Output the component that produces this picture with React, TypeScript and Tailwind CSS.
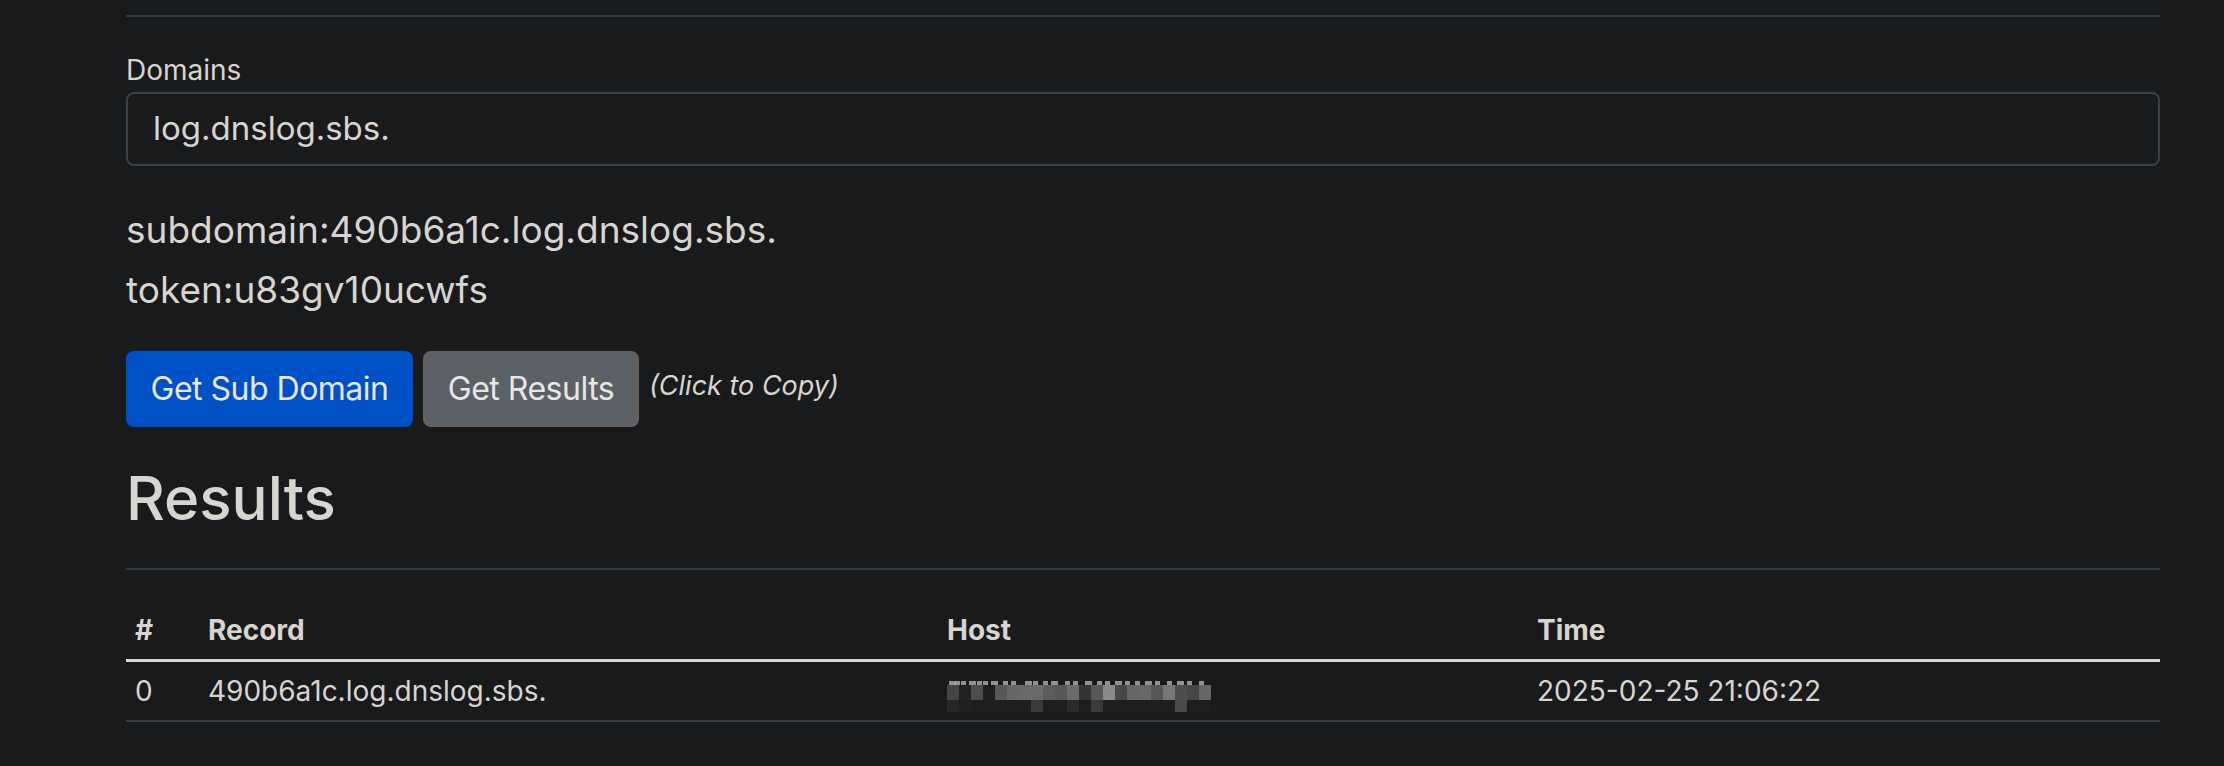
import React from "react";

const rowA = [
  "#454545", "#222222", "#4d4d4d", "#1e1e1e", "#575757", "#676767", "#6a6a6a", "#6a6a6a",
  "#5c5c5c", "#565656", "#6b6b6b", "#343434", "#575757", "#8a8a8a", "#474747", "#666666",
  "#686868", "#575757", "#777777", "#4d4d4d", "#474747", "#666666",
];
const rowB: Record<number, string> = { 0: "#262626", 1: "#202020", 7: "#3a3a3a", 10: "#2b2b2b", 12: "#3a3a3a", 19: "#4a4a4a" };
const tops = [2, 8, 14, 22, 30, 36, 44, 56, 64, 78, 86, 96, 104, 118, 126, 138, 150, 158, 168, 178, 188, 198, 208, 220, 230, 240, 252];

function Mosaic() {
  return (
    <svg width="264" height="32" viewBox="0 0 264 32" className="block">
      {tops.map((x, i) => (
        <rect key={"t" + i} x={x} y={1} width={i % 3 === 0 ? 7 : 5} height={4} fill="#bdbab5" opacity={0.75} />
      ))}
      {rowA.map((c, i) => (
        <rect key={"a" + i} x={i * 12} y={5} width={12} height={15} fill={c} />
      ))}
      {rowA.map((_, i) => (
        <rect key={"b" + i} x={i * 12} y={20} width={12} height={12} fill={rowB[i] ?? "#1c1e1f"} />
      ))}
    </svg>
  );
}

export default function App() {
  return (
    <div className="min-h-[766px] bg-[#181a1b] text-[#d8d4cf] font-['Inter',sans-serif]">
      <div className="ml-[126px] w-[2034px] pt-[15px]">
        <div className="h-[2px] bg-[#35393b]" />

        <label className="mt-[32px] block text-[28px] leading-[42px]">Domains</label>
        <div className="mt-[1px] h-[74px] rounded-[8px] border-2 border-[#3b4043] flex items-center px-[25px] text-[33px]">
          log.dnslog.sbs.
        </div>

        <div className="mt-[34px] text-[37px] leading-[60px]">
          <div>subdomain:490b6a1c.log.dnslog.sbs.</div>
          <div>token:u83gv10ucwfs</div>
        </div>

        <div className="mt-[31px] flex items-center h-[76px] gap-[10px]">
          <button className="h-[76px] w-[287px] rounded-[8px] bg-[#0050c6] border-2 border-[#0050c6] text-[#e8e6e3] text-[32px] tracking-[-0.5px] flex items-center justify-center">
            Get Sub Domain
          </button>
          <button className="h-[76px] w-[216px] rounded-[8px] bg-[#5b6166] border-2 border-[#6a6259] text-[#e8e6e3] text-[32px] tracking-[-0.5px] flex items-center justify-center">
            Get Results
          </button>
          <span className="mb-[6px] text-[27px] italic">(Click to Copy)</span>
        </div>

        <h2 className="mt-[34px] text-[60px] leading-[74px] font-medium">Results</h2>
        <div className="mt-[33px] h-[2px] bg-[#35393b]" />

        <table className="mt-[31px] w-full table-fixed border-collapse text-[28px] leading-[42px]">
          <colgroup>
            <col className="w-[73px]" />
            <col className="w-[739px]" />
            <col className="w-[590px]" />
            <col />
          </colgroup>
          <thead>
            <tr className="border-b-[3px] border-[#d8d4cf]">
              <th className="px-[9px] py-[8px] text-left font-bold">#</th>
              <th className="px-[9px] py-[8px] text-left font-bold">Record</th>
              <th className="px-[9px] py-[8px] text-left font-bold">Host</th>
              <th className="px-[9px] py-[8px] text-left font-bold">Time</th>
            </tr>
          </thead>
          <tbody>
            <tr className="border-b-2 border-[#373c3e]">
              <td className="px-[9px] py-[8px]">0</td>
              <td className="px-[9px] py-[8px]">490b6a1c.log.dnslog.sbs.</td>
              <td className="px-[9px] py-[8px]">
                <div className="h-[42px] pt-[10px]">
                  <Mosaic />
                </div>
              </td>
              <td className="px-[9px] py-[8px]">2025-02-25 21:06:22</td>
            </tr>
          </tbody>
        </table>
      </div>
    </div>
  );
}
